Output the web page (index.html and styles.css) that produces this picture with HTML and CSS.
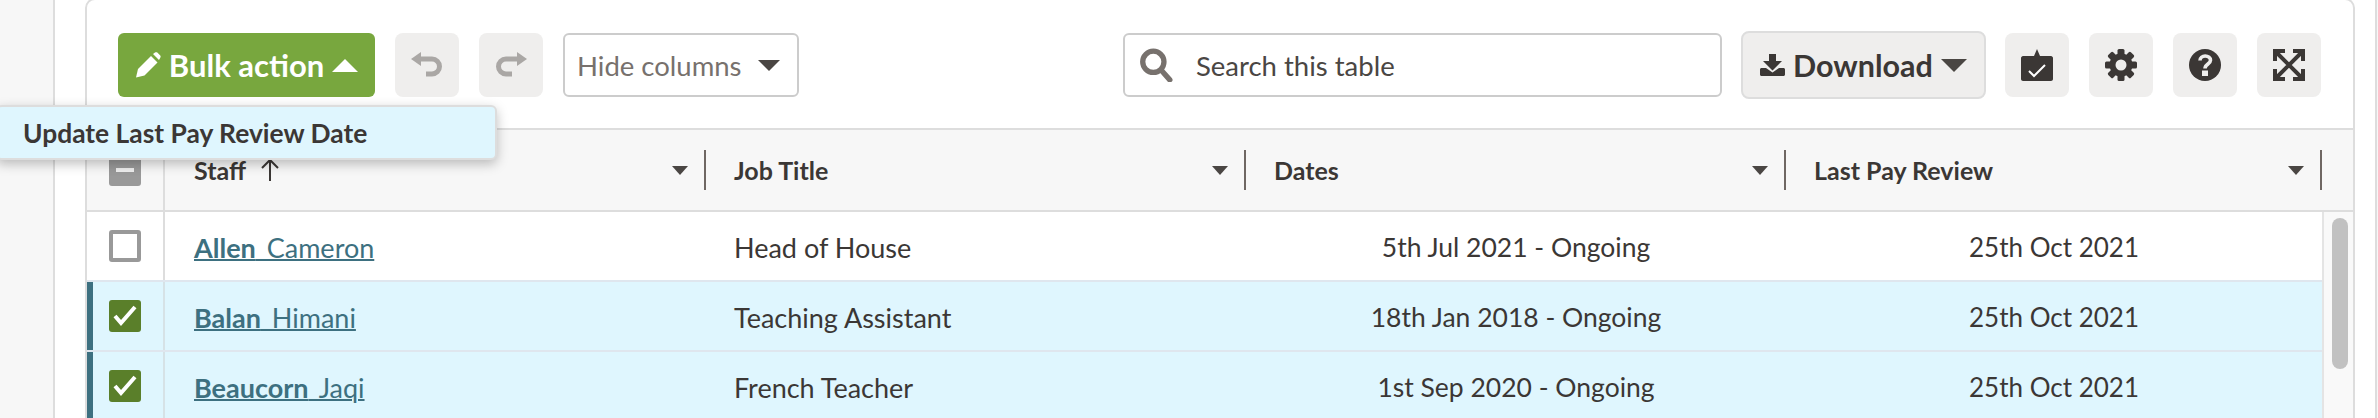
FILE: index.html
```html
<!DOCTYPE html>
<html lang="en">
<head>
    <meta charset="UTF-8">
    <meta name="viewport" content="width=device-width, initial-scale=1.0">
    <title>Staff Table</title>
    <link rel="stylesheet" href="styles.css">
</head>
<body>

<div class="page">
    <div class="side-strip"></div>

    <div class="card">
        <div class="toolbar">
            <button class="btn btn-bulk">
                <svg class="pencil" viewBox="0 0 26 26"><path d="M3 17L16 4l6.5 6.5L9.5 23.5 1 25.5z"/><path d="M18 2l2-1.5c.8-.5 1.6-.5 2.3 0l3 3c.5.7.5 1.5 0 2.3L24 8z"/></svg>
                Bulk action
                <span class="caret-up"></span>
            </button>
            <button class="btn-icon">
                <svg viewBox="0 0 32 26" class="icon-muted"><path d="M0 7l10-7v14z"/><path d="M8 7h13a7.5 7.5 0 010 15h-6" class="icon-line"/></svg>
            </button>
            <button class="btn-icon">
                <svg viewBox="0 0 32 26" class="icon-muted"><g transform="matrix(-1 0 0 1 32 0)"><path d="M0 7l10-7v14z"/><path d="M8 7h13a7.5 7.5 0 010 15h-6" class="icon-line"/></g></svg>
            </button>
            <div class="select-box">
                <span>Hide columns</span>
                <span class="caret-down"></span>
            </div>

            <div class="search-box">
                <svg viewBox="0 0 32 32" class="search-icon"><circle cx="13.5" cy="13" r="10" fill="none" stroke-width="5"/><path d="M21 21l8 9" fill="none" stroke-width="5" stroke-linecap="round"/></svg>
                <span>Search this table</span>
            </div>

            <button class="btn btn-download">
                <svg class="download-icon" viewBox="0 0 25 22"><path d="M9 0h7v7h6l-9.500 9.500L3 7h6z"/><path d="M1.500 14H6l6.500 4.500L19 14h4.500c.8 0 1.500.7 1.500 1.500v5c0 .8-.7 1.500-1.500 1.500h-22C.7 22 0 21.300 0 20.500v-5C0 14.700.7 14 1.500 14z"/></svg>
                Download
                <span class="caret-down caret-big"></span>
            </button>

            <div class="icon-group">
                <button class="btn-icon">
                    <svg viewBox="0 0 32 32"><path d="M2 7h11l3-7 3 7h11c1 0 2 1 2 2v21c0 1-1 2-2 2H2c-1 0-2-1-2-2V9c0-1 1-2 2-2z"/><path d="M8 22l5 5 11-11" fill="none" stroke="#fff" stroke-width="2"/></svg>
                </button>
                <button class="btn-icon">
                    <svg viewBox="0 0 32 32">
                        <rect x="12.500" y="0" width="7" height="32" rx="1.500"/>
                        <rect x="12.500" y="0" width="7" height="32" rx="1.500" transform="rotate(45 16 16)"/>
                        <rect x="12.500" y="0" width="7" height="32" rx="1.500" transform="rotate(90 16 16)"/>
                        <rect x="12.500" y="0" width="7" height="32" rx="1.500" transform="rotate(135 16 16)"/>
                        <circle cx="16" cy="16" r="11.500"/>
                        <circle cx="16" cy="16" r="5.500" fill="#efeeed"/>
                    </svg>
                </button>
                <button class="btn-icon">
                    <svg viewBox="0 0 32 32">
                        <circle cx="16" cy="16" r="16"/>
                        <path d="M11 11.500c0-2.500 2.300-4.500 5.200-4.500s5.300 1.900 5.300 4.300c0 3.700-5.500 3.700-5.500 8.200" fill="none" stroke="#efeeed" stroke-width="3.600"/>
                        <rect x="13" y="21.500" width="6" height="5.500" fill="#efeeed"/>
                    </svg>
                </button>
                <button class="btn-icon">
                    <svg viewBox="0 0 32 32" class="icon-expand">
                        <path d="M3 3l26 26M29 3L3 29"/>
                        <path d="M2 12V2h10M20 2h10v10M30 20v10H20M12 30H2V20"/>
                    </svg>
                </button>
            </div>
        </div>

        <div class="table-head">
            <div class="cell-check">
                <span class="check check-mixed"></span>
            </div>
            <div class="head-col head-staff">
                <span>Staff</span>
                <svg class="sort-arrow" viewBox="0 0 20 24"><path d="M10 23V2M2 10l8-8 8 8" fill="none" stroke-width="2"/></svg>
                <span class="caret-down caret-small"></span>
            </div>
            <div class="head-col head-wide">
                <span>Job Title</span>
                <span class="caret-down caret-small"></span>
            </div>
            <div class="head-col head-wide">
                <span>Dates</span>
                <span class="caret-down caret-small"></span>
            </div>
            <div class="head-col head-last">
                <span>Last Pay Review</span>
                <span class="caret-down caret-small"></span>
            </div>
        </div>

        <div class="table-body">
            <div class="rows">
                <div class="row">
                    <div class="cell-check"><span class="check"></span></div>
                    <div class="cell-name"><a href="#"><b>Allen</b> Cameron</a></div>
                    <div class="cell-job">Head of House</div>
                    <div class="cell-dates">5th Jul 2021 - Ongoing</div>
                    <div class="cell-review">25th Oct 2021</div>
                </div>
                <div class="row row-selected">
                    <div class="cell-check"><span class="check check-on"><svg viewBox="0 0 32 32"><path d="M6 16l6 7L26 7" fill="none" stroke="#fff" stroke-width="4"/></svg></span></div>
                    <div class="cell-name"><a href="#"><b>Balan</b> Himani</a></div>
                    <div class="cell-job">Teaching Assistant</div>
                    <div class="cell-dates">18th Jan 2018 - Ongoing</div>
                    <div class="cell-review">25th Oct 2021</div>
                </div>
                <div class="row row-selected">
                    <div class="cell-check"><span class="check check-on"><svg viewBox="0 0 32 32"><path d="M6 16l6 7L26 7" fill="none" stroke="#fff" stroke-width="4"/></svg></span></div>
                    <div class="cell-name"><a href="#"><b>Beaucorn</b> Jaqi</a></div>
                    <div class="cell-job">French Teacher</div>
                    <div class="cell-dates">1st Sep 2020 - Ongoing</div>
                    <div class="cell-review">25th Oct 2021</div>
                </div>
            </div>
            <div class="scroll-track">
                <div class="scroll-thumb"></div>
            </div>
        </div>
    </div>

    <div class="right-strip"></div>
</div>

<div class="bulk-menu">Update Last Pay Review Date</div>

</body>
</html>
```

FILE: styles.css
```css
* {
    box-sizing: border-box;
}
html, body {
    margin: 0;
    height: 418px;
    overflow: hidden;
    background-color: white;
    font-family: Lato, "Open Sans", sans-serif;
    color: #3b3735;
}
.page {
    display: flex;
    height: 418px;
}
.side-strip {
    width: 55px;
    flex-shrink: 0;
    background-color: #f7f7f7;
    border-right: 2px solid #ddd;
}
.card {
    width: 2270px;
    margin-left: 30px;
    margin-top: -2px;
    height: 440px;
    background-color: white;
    border: 2px solid #ddd;
    border-radius: 10px 10px 0 0;
    flex-shrink: 0;
}
.right-strip {
    width: 5px;
    margin-left: 20px;
    flex-shrink: 0;
    background-color: #f7f7f7;
    border-left: 2px solid #ddd;
}
.toolbar {
    display: flex;
    align-items: center;
    height: 128px;
    padding: 2px 0 0 31px;
}
button {
    font-family: inherit;
    border: none;
    cursor: pointer;
}
.btn {
    display: flex;
    align-items: center;
    justify-content: center;
    font-weight: 700;
}
.btn-bulk {
    width: 257px;
    height: 64px;
    border-radius: 6px;
    background-color: #78a73e;
    color: white;
    font-size: 31px;
    gap: 8px;
}
.pencil {
    width: 26px;
    height: 26px;
    fill: white;
}
.caret-up {
    width: 0;
    height: 0;
    border-left: 13px solid transparent;
    border-right: 13px solid transparent;
    border-bottom: 13px solid white;
}
.caret-down {
    width: 0;
    height: 0;
    border-left: 11px solid transparent;
    border-right: 11px solid transparent;
    border-top: 11px solid #4a4643;
}
.caret-big {
    border-left-width: 13px;
    border-right-width: 13px;
    border-top-width: 13px;
}
.caret-small {
    border-left-width: 8px;
    border-right-width: 8px;
    border-top-width: 9px;
    margin-left: auto;
}
.btn-icon {
    display: flex;
    align-items: center;
    justify-content: center;
    width: 64px;
    height: 64px;
    padding: 0;
    border-radius: 8px;
    background-color: #efeeed;
    margin-left: 20px;
}
.btn-icon svg {
    width: 32px;
    height: 32px;
    fill: #3b3735;
}
.btn-icon svg.icon-muted {
    height: 26px;
    fill: #aaa7a5;
}
.icon-line {
    fill: none;
    stroke: #aaa7a5;
    stroke-width: 5;
}
.icon-expand path {
    fill: none;
    stroke: #3b3735;
    stroke-width: 4;
}
.select-box {
    display: flex;
    align-items: center;
    justify-content: space-between;
    width: 236px;
    height: 64px;
    margin-left: 20px;
    padding: 0 17px 0 12px;
    border: 2px solid #ccc;
    border-radius: 6px;
    font-size: 27.5px;
    color: #77716d;
}
.search-box {
    display: flex;
    align-items: center;
    gap: 23px;
    width: 599px;
    height: 64px;
    margin-left: 324px;
    padding-left: 14px;
    border: 2px solid #ccc;
    border-radius: 6px;
    font-size: 27.5px;
    color: #4a4643;
}
.search-icon {
    width: 34px;
    height: 34px;
    stroke: #77716d;
}
.btn-download {
    width: 245px;
    height: 68px;
    margin-left: 19px;
    border: 2px solid #ddd;
    border-radius: 8px;
    background-color: #efeeed;
    color: #3b3735;
    font-size: 30.5px;
    gap: 8px;
}
.download-icon {
    width: 25px;
    height: 22px;
    fill: #3b3735;
}
.icon-group {
    display: flex;
    margin-left: -1px;
}
.table-head {
    display: flex;
    height: 84px;
    background-color: #f7f7f7;
    border-top: 2px solid #ddd;
    border-bottom: 2px solid #ddd;
}
.cell-check {
    display: flex;
    align-items: center;
    justify-content: center;
    width: 78px;
    flex-shrink: 0;
    border-right: 2px solid #ddd;
}
.head-col {
    display: flex;
    align-items: center;
    height: 40px;
    margin-top: 20px;
    padding: 0 16px 0 29px;
    border-right: 2px solid #6f6763;
    font-size: 25px;
    font-weight: 700;
}
.head-staff {
    width: 541px;
}
.head-wide {
    width: 540px;
    padding-left: 28px;
}
.head-last {
    width: 536px;
    padding-left: 28px;
}
.sort-arrow {
    width: 20px;
    height: 24px;
    margin-left: 14px;
    stroke: #3b3735;
}
.check {
    display: flex;
    width: 32px;
    height: 32px;
    border-radius: 3px;
    border: 4px solid #999;
    background-color: white;
}
.check-mixed {
    background-color: #999;
    align-items: center;
    justify-content: center;
}
.check-mixed::after {
    content: "";
    width: 18px;
    height: 4px;
    background-color: #eee;
}
.check-on {
    border: none;
    background-color: #5a7f2a;
}
.check-on svg {
    width: 32px;
    height: 32px;
}
.table-body {
    display: flex;
}
.rows {
    width: 2235px;
    flex-shrink: 0;
}
.row {
    display: flex;
    align-items: center;
    height: 70px;
    border-bottom: 2px solid #dfe6ee;
    font-size: 27px;
}
.row > div {
    padding-top: 2px;
}
.row .cell-check {
    height: 100%;
    padding-top: 0;
    border-right-color: #ddd;
}
.row-selected {
    background-color: #dff6fe;
    box-shadow: inset 6px 0 0 #3d7080;
}
.row-selected .cell-check {
    border-right-color: #d6e2e6;
}
.cell-name {
    width: 569px;
    padding-left: 29px;
}
.cell-name a {
    color: #3d7080;
    word-spacing: 4px;
    text-decoration-thickness: 2px;
}
.cell-job {
    width: 512px;
}
.cell-dates {
    width: 540px;
    text-align: center;
    font-size: 26.5px;
}
.cell-review {
    width: 536px;
    text-align: center;
    font-size: 26px;
}
.scroll-track {
    width: 31px;
    padding: 6px 0 0 8px;
    background-color: #f9f9f9;
    border-left: 2px solid #e4e4e4;
}
.scroll-thumb {
    width: 16px;
    height: 151px;
    border-radius: 8px;
    background-color: #c1c1c1;
}
.bulk-menu {
    position: absolute;
    left: -4px;
    top: 105px;
    display: flex;
    align-items: center;
    width: 501px;
    height: 55px;
    padding-left: 25px;
    border: 2px solid #ddd;
    border-radius: 6px;
    background-color: #dff6fe;
    box-shadow: 0 4px 12px rgba(0, 0, 0, 0.25);
    font-size: 26.4px;
    font-weight: 700;
}
```
